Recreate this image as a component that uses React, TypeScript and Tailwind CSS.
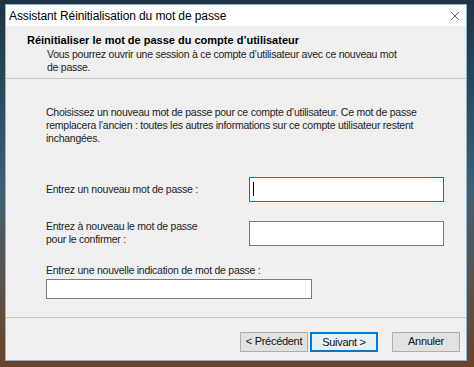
import { X } from "lucide-react";

function Field({ className = "" }: { className?: string }) {
  return <div className={`border border-[#7a7a7a] bg-white ${className}`} />;
}

function WinButton({ label, primary = false }: { label: string; primary?: boolean }) {
  return (
    <button
      className={`h-[20px] w-[68px] text-[11px] tracking-[-0.3px] text-[#111] ${
        primary ? "border-2 border-[#0078d7] bg-[#e5f1fb]" : "border border-[#adadad] bg-[#e1e1e1]"
      }`}
    >
      {label}
    </button>
  );
}

export default function App() {
  return (
    <div
      className="h-[367px] w-[474px] overflow-hidden bg-gradient-to-b from-[#1d3446] via-[#3c5f73] to-[#6a4328] pb-[6px] pl-[5px] pr-[7px] pt-[4px]"
      style={{ fontFamily: '"Liberation Sans", Arial, sans-serif' }}
    >
      <div className="flex h-full flex-col border border-[#8ab6d6] bg-[#f0f0f0]">
        {/* Title bar */}
        <div className="flex h-[21px] items-center justify-between bg-white pl-[3px] pr-[4px]">
          <span className="text-[12px] tracking-[-0.1px] text-black">Assistant Réinitialisation du mot de passe</span>
          <X className="h-[14px] w-[14px] text-[#222]" strokeWidth={1.3} />
        </div>

        {/* Header */}
        <div className="h-[53px] border-b border-[#c8c8c8] pl-[21px] pt-[8px]">
          <p className="text-[11px] font-bold leading-[13px] text-black">
            Réinitialiser le mot de passe du compte d’utilisateur
          </p>
          <p className="mt-[1px] whitespace-nowrap pl-[20px] text-[10.5px] leading-[13px] tracking-[-0.25px] text-[#222]">
            Vous pourrez ouvrir une session à ce compte d’utilisateur avec ce nouveau mot
            <br />
            de passe.
          </p>
        </div>

        {/* Body */}
        <div className="flex-1 pl-[40px] pr-[22px] pt-[27px] text-[10.5px] leading-[13px] tracking-[-0.25px] text-[#222]">
          <p className="whitespace-nowrap">
            Choisissez un nouveau mot de passe pour ce compte d’utilisateur. Ce mot de passe
            <br />
            remplacera l’ancien : toutes les autres informations sur ce compte utilisateur restent
            <br />
            inchangées.
          </p>

          <div className="mt-[32px] flex items-center justify-between">
            <span>Entrez un nouveau mot de passe :</span>
            <div className="h-[25px] w-[195px] border border-[#0078d7] bg-white pl-[3px] pt-[4px]">
              <div className="h-[14px] w-px bg-black" />
            </div>
          </div>

          <div className="mt-[18px] flex items-center justify-between">
            <span>
              Entrez à nouveau le mot de passe
              <br />
              pour le confirmer :
            </span>
            <Field className="h-[25px] w-[195px]" />
          </div>

          <p className="mt-[18px]">Entrez une nouvelle indication de mot de passe :</p>
          <Field className="mt-[2px] h-[20px] w-[266px]" />
        </div>

        {/* Footer */}
        <div className="flex h-[43px] items-center justify-end gap-[2px] border-t border-[#c8c8c8] pr-[6px] pt-[5px]">
          <WinButton label="< Précédent" />
          <WinButton label="Suivant >" primary />
          <div className="w-[10px]" />
          <WinButton label="Annuler" />
        </div>
      </div>
    </div>
  );
}
